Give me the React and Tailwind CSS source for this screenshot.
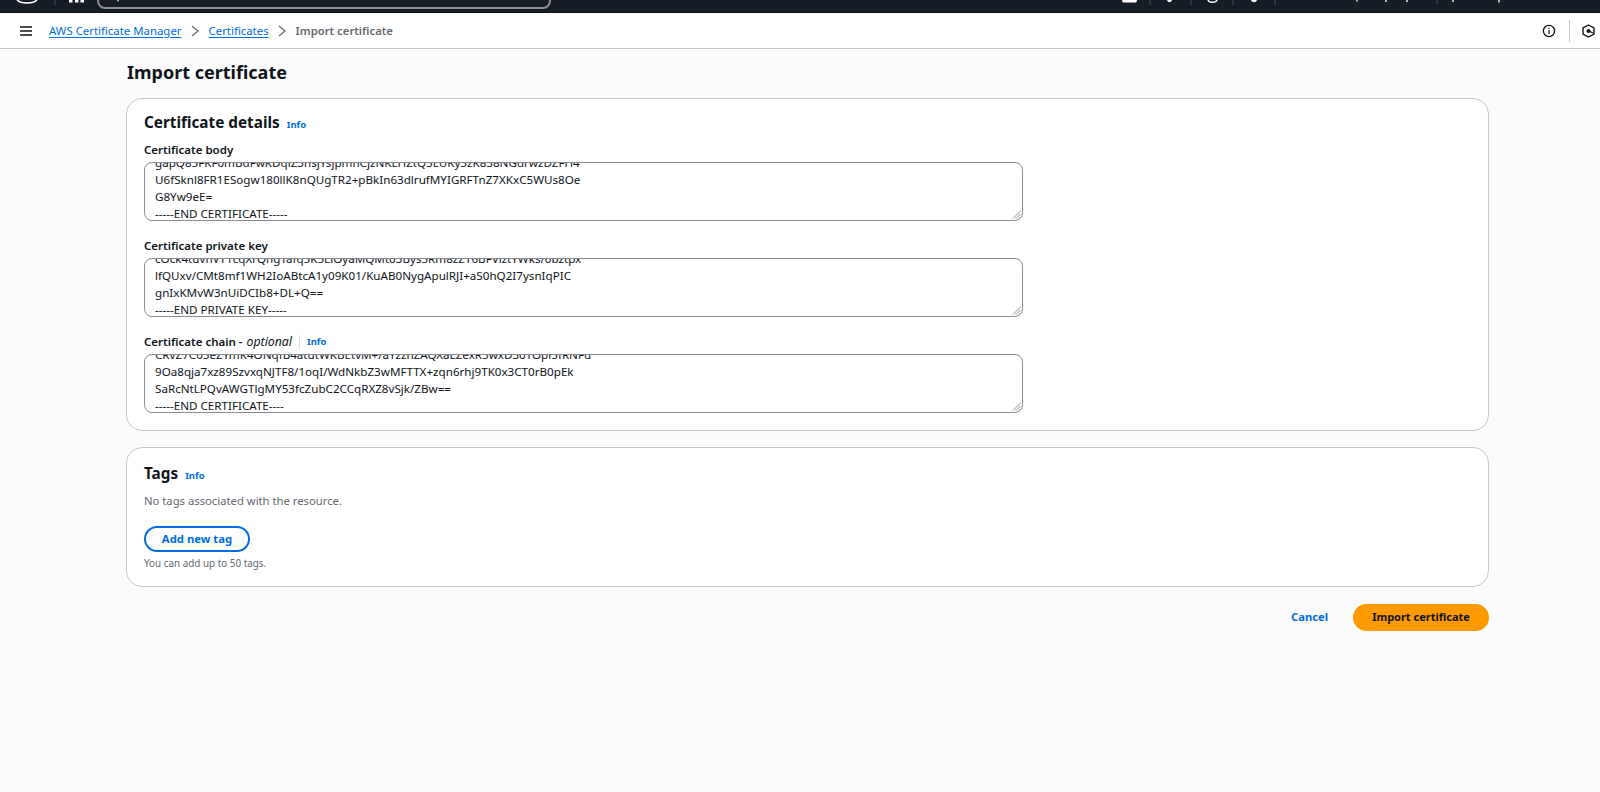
import React from "react";

const font = { fontFamily: '"Noto Sans", sans-serif' };

function Info() {
  return <span className="text-[9.5px] font-bold text-[#006ce0] leading-none">Info</span>;
}

function Handle() {
  return (
    <svg className="absolute right-[1px] bottom-[1px]" width="9" height="9" viewBox="0 0 9 9">
      <path d="M8.5 1 L1 8.5 M8.5 4 L4 8.5 M8.5 7 L7 8.5" stroke="#8a8a8a" strokeWidth="1" fill="none" />
    </svg>
  );
}

function Box({ lines }) {
  return (
    <div className="relative h-[59px] w-[879px] rounded-lg border border-[#8c8c94] bg-white overflow-hidden flex flex-col justify-end pl-[10px] text-[11.64px] leading-[17px] text-[#0f141a] whitespace-nowrap">
      <div className="shrink-0 -mb-[2px]">
        {lines.map((l) => (
          <div key={l} className="h-[17px]">{l}</div>
        ))}
      </div>
      <Handle />
    </div>
  );
}

function TopFragments() {
  return (
    <svg className="absolute left-0 top-0" width="1600" height="12" viewBox="0 0 1600 12">
      <path d="M17 0c4 4 16 4 20 0" stroke="#ffffff" strokeWidth="1.6" fill="none" />
      <path d="M69 0h3.500v2.500H69zM75 0h3.500v2.500H75zM80.500 0H84v2.500h-3.500z" fill="#ffffff" />
      <path d="M55 0v5M1150 0v5M1191 0v5M1233 0v5M1275 0v5M1437 0v4" stroke="#4a505a" strokeWidth="1" />
      <path d="M118 0v1.500" stroke="#d5d5d5" strokeWidth="1.500" />
      <path d="M1122 0c0 2 1 2.500 2 2.500h11c1 0 2-.5 2-2.500z" fill="#ffffff" />
      <path d="M1167 0c1 3 4 3 5 0z" fill="#ffffff" />
      <path d="M1208 0c1 3 8 3 9 0" stroke="#ffffff" strokeWidth="1.400" fill="none" />
      <path d="M1251 0c1 3 5 3 6 0z" fill="#ffffff" />
      <path d="M1357 0v1.500M1386 0v2M1407 0v2M1453 0v2M1499 0v2.500" stroke="#e5e5e5" strokeWidth="1.500" />
    </svg>
  );
}

export default function App() {
  return (
    <div style={font} className="h-[792px] w-[1600px] bg-[#fbfbfb] overflow-hidden flex flex-col">
      <div className="h-[13px] shrink-0 bg-[#161d26] border-b border-[#0b0f14] overflow-hidden flex items-end relative">
        <div className="ml-[97px] mb-[3px] w-[454px] h-[20px] border-2 border-[#8c8c94] rounded-lg shrink-0" />
        <TopFragments />
      </div>
      <div className="h-[36px] shrink-0 bg-white border-b border-[#c6c6cd] flex items-center pl-[20px] pr-[5px]">
        <svg width="12" height="12" viewBox="0 0 12 12" className="shrink-0">
          <path d="M0 2h12M0 6h12M0 10h12" stroke="#0f141a" strokeWidth="1.4" />
        </svg>
        <div className="ml-[17px] flex items-center text-[11.4px] leading-[16px]">
          <span className="text-[#006ce0] underline underline-offset-2">AWS Certificate Manager</span>
          <svg width="8" height="12" viewBox="0 0 8 12" className="ml-[9px] mr-[10px]">
            <path d="M1 1l6 5-6 5" stroke="#656871" strokeWidth="1.2" fill="none" />
          </svg>
          <span className="text-[#006ce0] underline underline-offset-2">Certificates</span>
          <svg width="8" height="12" viewBox="0 0 8 12" className="ml-[9px] mr-[10px]">
            <path d="M1 1l6 5-6 5" stroke="#656871" strokeWidth="1.2" fill="none" />
          </svg>
          <span className="text-[#656871] font-semibold text-[11.3px]">Import certificate</span>
        </div>
        <div className="ml-auto flex items-center">
          <svg width="14" height="14" viewBox="0 0 14 14">
            <circle cx="7" cy="7" r="5.6" stroke="#0f141a" strokeWidth="1.3" fill="none" />
            <path d="M7 6v4M7 3.800v1.200" stroke="#0f141a" strokeWidth="1.2" />
          </svg>
          <div className="w-px h-[22px] bg-[#c6c6cd] ml-[13px] mr-[12px]" />
          <svg width="13" height="14" viewBox="0 0 13 14">
            <path d="M6.500 1L12 4v6l-5.500 3L1 10V4z" stroke="#0f141a" strokeWidth="1.4" fill="none" />
            <circle cx="6.500" cy="7" r="2" fill="#0f141a" />
            <path d="M7 7l4 2" stroke="#0f141a" strokeWidth="1.2" />
          </svg>
        </div>
      </div>

      <div className="w-[1363px] ml-[126px] pt-[11px]">
        <h1 className="text-[18px] leading-[24px] font-bold text-[#0f141a] h-[25px] pl-[1px]">Import certificate</h1>

        <section className="mt-[13px] h-[333px] rounded-2xl border border-[#c6c6cd] bg-white pl-[17px] pt-[12px]">
          <div className="flex items-baseline gap-[7px] h-[22px]">
            <h2 className="text-[15.3px] leading-[22px] font-bold text-[#0f141a]">Certificate details</h2>
            <Info />
          </div>
          <div className="mt-[9px] text-[11.5px] leading-[16px] font-semibold text-[#0f141a]">Certificate body</div>
          <div className="mt-[4px]">
            <Box lines={[
              "gapQ85FKF0mBdFwKDqlZ3nsjYsjpmnCjzNKLHZtQ5LUKy5zK858NGdrwzDZFH4",
              "U6fSknl8FR1ESogw180llK8nQUgTR2+pBkIn63dlrufMYIGRFTnZ7XKxC5WUs8Oe",
              "G8Yw9eE=",
              "-----END CERTIFICATE-----",
            ]} />
          </div>
          <div className="mt-[17px] text-[11.5px] leading-[16px] font-semibold text-[#0f141a]">Certificate private key</div>
          <div className="mt-[4px]">
            <Box lines={[
              "cOck4tuvnVT1cqXrQhgTafq5K5LiOyaMQMt03Bys5Rm8zZT6BFVlztYWks/0bztpx",
              "lfQUxv/CMt8mf1WH2IoABtcA1y09K01/KuAB0NygApulRJI+aS0hQ2I7ysnIqPIC",
              "gnIxKMvW3nUiDCIb8+DL+Q==",
              "-----END PRIVATE KEY-----",
            ]} />
          </div>
          <div className="mt-[17px] flex items-center text-[11.5px] leading-[16px] text-[#0f141a]">
            <span className="font-semibold">Certificate chain -</span>
            <span className="italic ml-[4px] text-[12.3px]">optional</span>
            <div className="w-px h-[14px] bg-[#dedee3] ml-[7px] mr-[7px]" />
            <Info />
          </div>
          <div className="mt-[4px]">
            <Box lines={[
              "CRvZ7C05eZYmK4ONqfB4atutWKBEtvM+/aYzzhZAQXaLZexR5wxD30TOpl5fRNFu",
              "9Oa8qja7xz89SzvxqNJTF8/1oqI/WdNkbZ3wMFTTX+zqn6rhj9TK0x3CT0rB0pEk",
              "SaRcNtLPQvAWGTlgMY53fcZubC2CCqRXZ8vSjk/ZBw==",
              "-----END CERTIFICATE----",
            ]} />
          </div>
        </section>

        <section className="mt-[16px] h-[140px] rounded-2xl border border-[#c6c6cd] bg-white pl-[17px] pt-[14px]">
          <div className="flex items-baseline gap-[7px] h-[22px]">
            <h2 className="text-[15.3px] leading-[22px] font-bold text-[#0f141a]">Tags</h2>
            <Info />
          </div>
          <p className="mt-[9px] text-[11.27px] leading-[16px] text-[#656871]">No tags associated with the resource.</p>
          <button className="mt-[17px] block h-[26px] w-[106px] rounded-full border-2 border-[#006ce0] bg-white text-[11.3px] font-bold text-[#006ce0]">Add new tag</button>
          <p className="mt-[4px] text-[9.9px] leading-[14px] text-[#656871]">You can add up to 50 tags.</p>
        </section>

        <div className="mt-[17px] flex items-center justify-end">
          <span className="text-[11.2px] font-bold text-[#006ce0] mr-[25px]">Cancel</span>
          <button className="h-[27px] w-[136px] rounded-full bg-[#ff9900] text-[11px] font-bold text-[#0f141a]">Import certificate</button>
        </div>
      </div>
    </div>
  );
}
